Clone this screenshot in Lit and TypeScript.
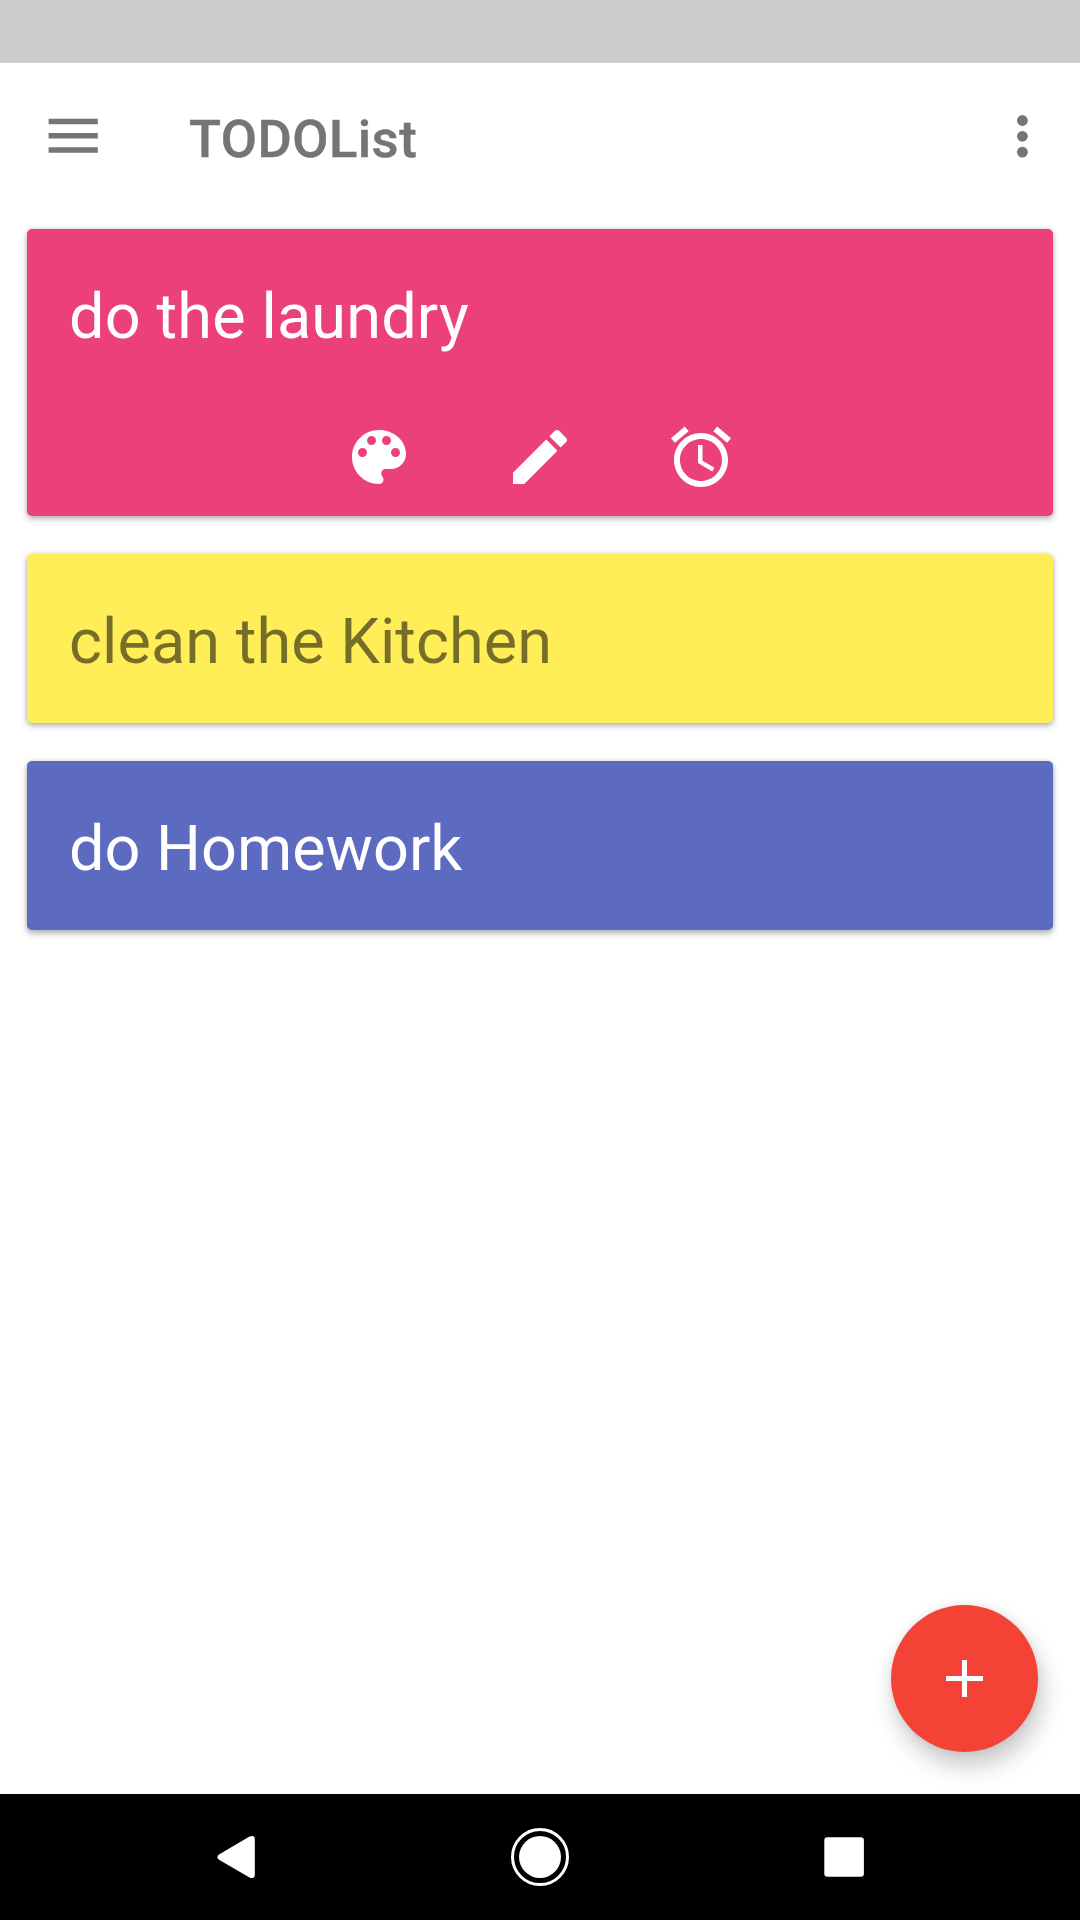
import { LitElement, html, css, svg, type SVGTemplateResult } from "lit";
import { customElement, property } from "lit/decorators.js";
import { classMap } from "lit/directives/class-map.js";

interface Task {
  title: string;
  tone: "pink" | "yellow" | "indigo";
  open?: boolean;
}

const TASKS: Task[] = [
  { title: "do the laundry", tone: "pink", open: true },
  { title: "clean the Kitchen", tone: "yellow" },
  { title: "do Homework", tone: "indigo" },
];

const ACTIONS: { label: string; icon: SVGTemplateResult }[] = [
  {
    label: "Color",
    icon: svg`<path d="M12 3c-4.97 0-9 4.03-9 9s4.03 9 9 9c.83 0 1.5-.67 1.5-1.5 0-.39-.15-.74-.39-1.01-.23-.26-.38-.61-.38-.99 0-.83.67-1.5 1.5-1.5H16c2.76 0 5-2.24 5-5 0-4.42-4.03-8-9-8zm-5.5 9c-.83 0-1.5-.67-1.5-1.5S5.67 9 6.5 9 8 9.67 8 10.5 7.33 12 6.5 12zm3-4C8.67 8 8 7.33 8 6.5S8.67 5 9.5 5s1.5.67 1.5 1.5S10.33 8 9.5 8zm5 0c-.83 0-1.5-.67-1.5-1.5S13.67 5 14.5 5s1.5.67 1.5 1.5S15.33 8 14.5 8zm3 4c-.83 0-1.5-.67-1.5-1.5S16.67 9 17.5 9s1.5.67 1.5 1.5-.67 1.5-1.5 1.5z"/>`,
  },
  {
    label: "Edit",
    icon: svg`<path d="M3 17.25V21h3.75L17.81 9.94l-3.75-3.75L3 17.25zM20.71 7.04c.39-.39.39-1.02 0-1.41l-2.34-2.34c-.39-.39-1.02-.39-1.41 0l-1.83 1.83 3.75 3.75 1.83-1.83z"/>`,
  },
  {
    label: "Alarm",
    icon: svg`<path d="M22 5.72l-4.6-3.86-1.29 1.53 4.6 3.86L22 5.72zM7.88 3.39L6.6 1.86 2 5.71l1.29 1.53 4.59-3.85zM12.5 8H11v6l4.75 2.85.75-1.23-4-2.37V8zM12 4c-4.97 0-9 4.03-9 9s4.02 9 9 9c4.97 0 9-4.03 9-9s-4.03-9-9-9zm0 16c-3.87 0-7-3.13-7-7s3.13-7 7-7 7 3.13 7 7-3.13 7-7 7z"/>`,
  },
];

@customElement("task-card")
class TaskCard extends LitElement {
  @property({ attribute: false }) task!: Task;

  static styles = css`
    :host { display: block; }
    .card {
      box-sizing: border-box;
      min-height: 169px;
      padding: 51px 42px 0;
      border-radius: 5px;
      color: #fff;
      box-shadow: 0 3px 6px rgba(0, 0, 0, 0.26), 0 0 5px rgba(0, 0, 0, 0.14);
    }
    .open { min-height: 287px; }
    .pink { background: #ec407a; }
    .yellow { background: #ffee58; color: rgba(0, 0, 0, 0.54); }
    .indigo {
      background: #5c6bc0;
      box-shadow: 0 4px 6px rgba(0, 0, 0, 0.26), 0 0 5px rgba(0, 0, 0, 0.14);
    }
    .title {
      margin: 0;
      font-size: 63px;
      line-height: 74px;
      font-weight: 400;
    }
    .yellow .title { letter-spacing: 0.06px; }
    .pink .title { letter-spacing: 0.15px; }
    .actions {
      display: flex;
      justify-content: center;
      gap: 89px;
      padding-top: 67px;
    }
    .icon { display: block; width: 72px; height: 72px; fill: #fff; }
  `;

  render() {
    const { title, tone, open } = this.task;
    return html`
      <article class=${classMap({ card: true, [tone]: true, open: !!open })}>
        <h2 class="title">${title}</h2>
        ${open
          ? html`<div class="actions">
              ${ACTIONS.map(
                (a) => html`<svg class="icon" viewBox="0 0 24 24" role="img" aria-label=${a.label}>${a.icon}</svg>`
              )}
            </div>`
          : null}
      </article>
    `;
  }
}

@customElement("app-root")
class AppRoot extends LitElement {
  static styles = css`
    :host {
      display: block;
      font-family: Roboto, "Liberation Sans", sans-serif;
    }
    .screen {
      position: relative;
      display: flex;
      flex-direction: column;
      width: 1080px;
      height: 1920px;
      overflow: hidden;
      background: #fff;
    }
    .status { flex: none; height: 63px; background: #ccc; }
    .bar {
      flex: none;
      display: flex;
      align-items: center;
      box-sizing: border-box;
      height: 147px;
      padding: 0 52px 0 48px;
      color: #757575;
      fill: #757575;
    }
    .menu { display: block; width: 50px; height: 36px; margin-top: -1px; }
    .heading {
      flex: 1;
      margin: 4px 0 0 91px;
      font-size: 52.5px;
      line-height: 62px;
      font-weight: 500;
      letter-spacing: 0.5px;
      -webkit-text-stroke: 0.5px #757575;
    }
    .more { display: block; width: 12px; height: 44px; margin-top: -1px; }
    .list {
      flex: 1;
      display: flex;
      flex-direction: column;
      gap: 38px;
      padding: 19px 27px 0;
    }
    .fab {
      position: absolute;
      right: 42px;
      bottom: 168px;
      display: flex;
      align-items: center;
      justify-content: center;
      width: 147px;
      height: 147px;
      padding: 0;
      border: 0;
      border-radius: 50%;
      background: #f44336;
      box-shadow: 4px 14px 24px rgba(0, 0, 0, 0.22), 0 0 9px rgba(0, 0, 0, 0.08);
    }
    .plus { display: block; width: 37px; height: 37px; fill: #fff; }
    .nav {
      position: relative;
      flex: none;
      display: flex;
      align-items: center;
      justify-content: center;
      gap: 244px;
      height: 126px;
      background: #000;
      fill: #fff;
    }
    .key { display: block; width: 60px; height: 60px; }
  `;

  render() {
    return html`
      <div class="screen">
        <div class="status"></div>
        <header class="bar">
          <svg class="menu" viewBox="0 0 50 36" role="img" aria-label="Menu">
            <path d="M.6.8h49.2v5.4H.6zM.6 15h49.2v5.4H.6zM.6 29.3h49.2v5.4H.6z" />
          </svg>
          <h1 class="heading">TODOList</h1>
          <svg class="more" viewBox="0 0 12 44" role="img" aria-label="More options">
            <circle cx="6.4" cy="6.5" r="5.4" />
            <circle cx="6.4" cy="22.3" r="5.4" />
            <circle cx="6.4" cy="38.1" r="5.4" />
          </svg>
        </header>
        <main class="list">
          ${TASKS.map((t) => html`<task-card .task=${t}></task-card>`)}
        </main>
        <button class="fab" aria-label="Add">
          <svg class="plus" viewBox="0 0 37 37"><path d="M16 0h5v16h16v5H21v16h-5V21H0v-5h16z" /></svg>
        </button>
        <nav class="nav">
          <svg class="key" viewBox="0 0 60 60" role="img" aria-label="Back">
            <path d="M13 27.4 43.5 9.5Q48.8 7.6 48.8 12.2V47.8Q48.8 52.4 43.5 50.5L13 32.8Q9.7 30 13 27.4z" />
          </svg>
          <svg class="key" viewBox="0 0 60 60" role="img" aria-label="Home">
            <circle cx="30" cy="30" r="27.5" fill="none" stroke="#fff" stroke-width="3" />
            <circle cx="30" cy="30" r="21" />
          </svg>
          <svg class="key" viewBox="0 0 60 60" role="img" aria-label="Recent apps">
            <rect x="10.3" y="10.2" width="39.6" height="39.6" rx="3" />
          </svg>
        </nav>
      </div>
    `;
  }
}
